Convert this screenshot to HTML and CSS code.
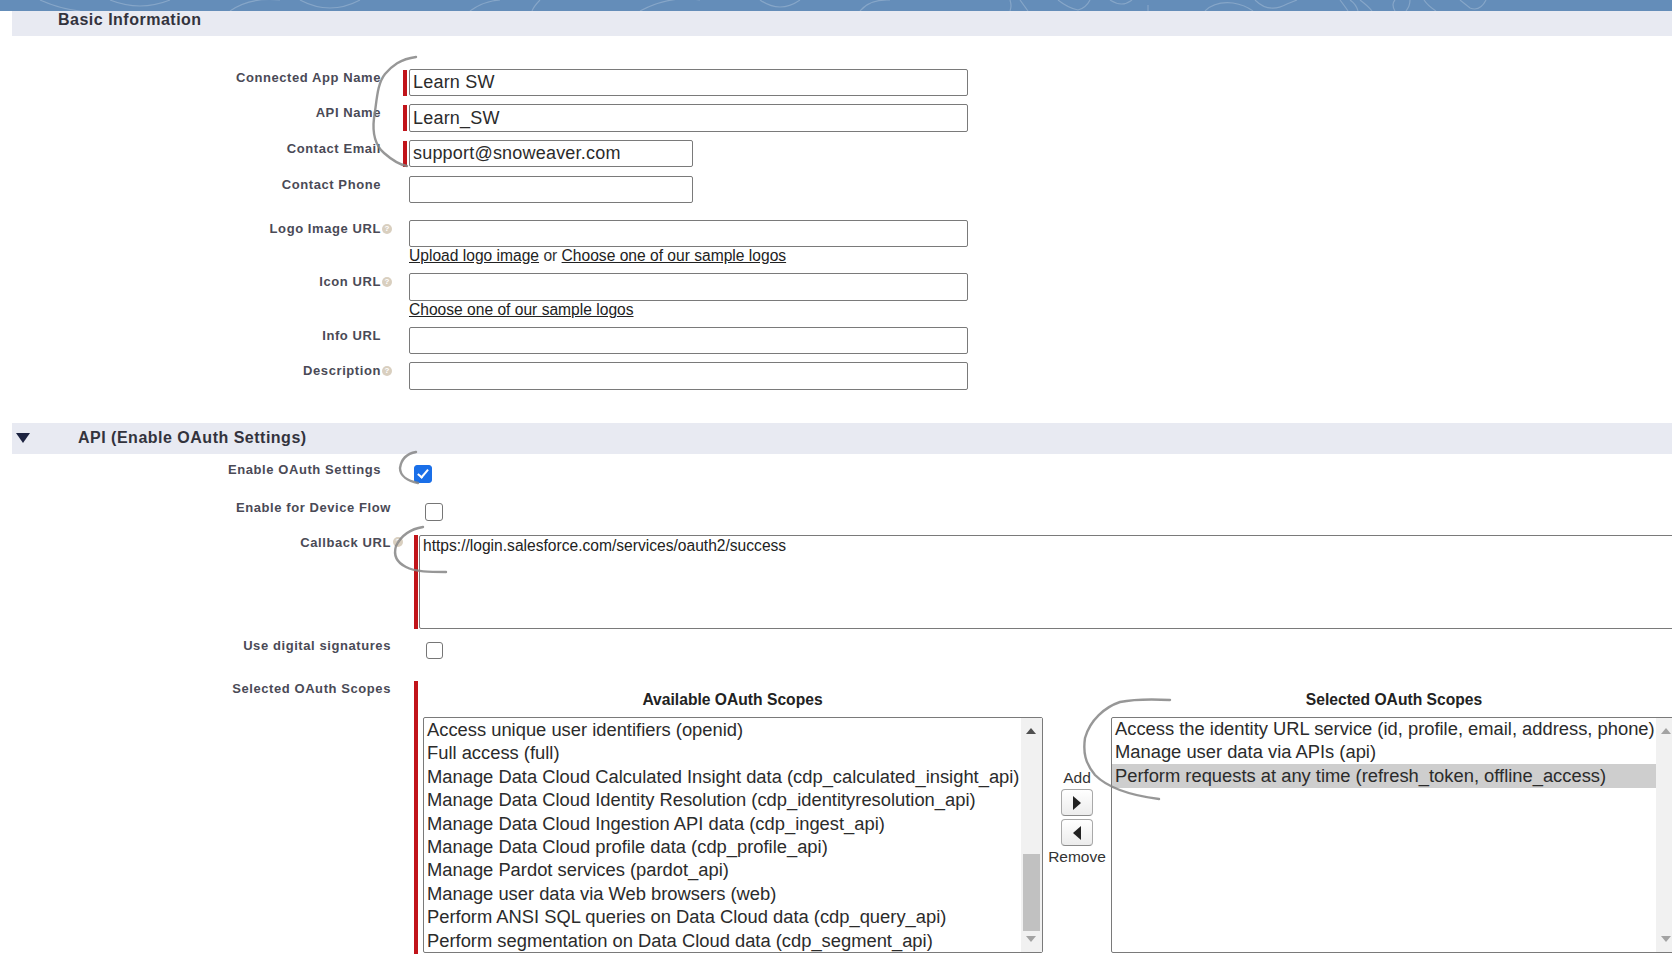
FILE: index.html
```html
<!DOCTYPE html>
<html lang="en">
<head>
<meta charset="utf-8">
<title>Connected App</title>
<link rel="stylesheet" href="styles.css">
</head>
<body>
<div class="banner">
  <svg class="banner-art" width="1672" height="11" viewBox="0 0 1672 11" fill="none">
    <path d="M40 0q20 9 40 11M110 0q30 12 60 0M230 11q20-14 50-11M300 0q30 16 60 0M470 11q14-10 30-11M540 0q-6 6-8 11M640 11q30-16 60-11M760 0q20 14 40 0M860 11q10-12 30-11M1010 0q2 6 0 11M1020 0l8 11M1058 0q10 8 20 10q8-2 12-10M1110 0q12 8 22 0M1148 11v-6M1205 11q10-10 28-8q12 2 20 8M1255 0q14 14 32 4l10-4M1340 0q6 8 8 11M1350 0q6 4 8 11M1360 0q8 6 12 11M1395 0q-4 4 0 11M1410 0q0 6-4 11M1424 0q4 6 12 11M1460 0l10 8q10 4 16-8" />
  </svg>
</div>

<section class="section section-basic">
  <h2 class="section-title title-basic">Basic Information</h2>
  <div class="rows-basic">
    <div class="row">
      <label class="label">Connected App Name</label><span class="help-slot"></span><span class="req"></span>
      <div class="field"><input class="text wide" type="text" value="Learn SW"></div>
    </div>
    <div class="row row-tight">
      <label class="label">API Name</label><span class="help-slot"></span><span class="req"></span>
      <div class="field"><input class="text wide" type="text" value="Learn_SW"></div>
    </div>
    <div class="row row-after-tall">
      <label class="label">Contact Email</label><span class="help-slot"></span><span class="req"></span>
      <div class="field"><input class="text short" type="text" value="support@snoweaver.com"></div>
    </div>
    <div class="row">
      <label class="label">Contact Phone</label><span class="help-slot"></span><span class="req-none"></span>
      <div class="field"><input class="text short" type="text"></div>
    </div>
    <div class="row row-group">
      <label class="label">Logo Image URL</label><span class="help-slot"><span class="help">?</span></span><span class="req-none"></span>
      <div class="field">
        <input class="text wide" type="text">
        <div class="links"><a href="#">Upload logo image</a> or <a href="#">Choose one of our sample logos</a></div>
      </div>
    </div>
    <div class="row row-tight">
      <label class="label">Icon URL</label><span class="help-slot"><span class="help">?</span></span><span class="req-none"></span>
      <div class="field">
        <input class="text wide" type="text">
        <div class="links"><a href="#">Choose one of our sample logos</a></div>
      </div>
    </div>
    <div class="row">
      <label class="label">Info URL</label><span class="help-slot"></span><span class="req-none"></span>
      <div class="field"><input class="text wide" type="text"></div>
    </div>
    <div class="row row-tight">
      <label class="label">Description</label><span class="help-slot"><span class="help">?</span></span><span class="req-none"></span>
      <div class="field"><input class="text wide" type="text"></div>
    </div>
  </div>
</section>

<section class="section section-api">
  <h2 class="section-title title-api">
    <svg class="twist" width="14" height="10" viewBox="0 0 14 10"><path d="M0 0h14L7 10z" fill="#1c2340"/></svg>
    <span>API (Enable OAuth Settings)</span>
  </h2>
  <div class="api-row row-enable">
    <label class="label label-api label-short">Enable OAuth Settings</label>
    <input class="check check-enable" type="checkbox" checked>
  </div>
  <div class="api-row row-device">
    <label class="label label-api">Enable for Device Flow</label>
    <input class="check check-device" type="checkbox">
  </div>
  <div class="api-row row-callback">
    <label class="label label-api label-help">Callback URL<span class="help help-callback">?</span></label>
    <span class="req-api"></span>
    <textarea class="callback">https://login.salesforce.com/services/oauth2/success</textarea>
  </div>
  <div class="api-row row-digital">
    <label class="label label-api">Use digital signatures</label>
    <input class="check check-digital" type="checkbox">
  </div>
  <div class="api-row row-scopes">
    <label class="label label-api">Selected OAuth Scopes</label>
    <span class="req-api"></span>
    <div class="scopes">
      <div class="scope-col">
        <div class="scope-head">Available OAuth Scopes</div>
        <div class="listbox">
          <ul class="options">
            <li>Access unique user identifiers (openid)</li>
            <li>Full access (full)</li>
            <li>Manage Data Cloud Calculated Insight data (cdp_calculated_insight_api)</li>
            <li>Manage Data Cloud Identity Resolution (cdp_identityresolution_api)</li>
            <li>Manage Data Cloud Ingestion API data (cdp_ingest_api)</li>
            <li>Manage Data Cloud profile data (cdp_profile_api)</li>
            <li>Manage Pardot services (pardot_api)</li>
            <li>Manage user data via Web browsers (web)</li>
            <li>Perform ANSI SQL queries on Data Cloud data (cdp_query_api)</li>
            <li>Perform segmentation on Data Cloud data (cdp_segment_api)</li>
          </ul>
          <div class="scrollbar">
            <span class="arrow-up"></span>
            <span class="thumb"></span>
            <span class="arrow-down"></span>
          </div>
        </div>
      </div>
      <div class="mover">
        <div class="mover-text">Add</div>
        <button class="mover-btn mover-add" type="button"><svg width="8" height="14" viewBox="0 0 8 14"><path d="M0 0l8 7-8 7z" fill="#222"/></svg></button>
        <button class="mover-btn" type="button"><svg width="8" height="14" viewBox="0 0 8 14"><path d="M8 0L0 7l8 7z" fill="#222"/></svg></button>
        <div class="mover-text mover-remove">Remove</div>
      </div>
      <div class="scope-col scope-selected">
        <div class="scope-head">Selected OAuth Scopes</div>
        <div class="listbox">
          <ul class="options options-selected">
            <li>Access the identity URL service (id, profile, email, address, phone)</li>
            <li>Manage user data via APIs (api)</li>
            <li class="is-selected">Perform requests at any time (refresh_token, offline_access)</li>
          </ul>
          <div class="scrollbar scrollbar-idle">
            <span class="arrow-up"></span>
            <span class="arrow-down"></span>
          </div>
        </div>
      </div>
    </div>
  </div>
</section>

<svg class="ink" width="1672" height="954" viewBox="0 0 1672 954" fill="none">
  <path d="M416 57C400 59 392 66 385 74C377 84 377 100 374 118C372 135 376 146 384 153C392 160 400 165 407 166"/>
  <path d="M416 452C405 454 401 461 400 468C400 476 408 481 418 483"/>
  <path d="M423 527C410 529 401 536 396 546C393 556 398 563 406 567C415 572 430 572 446 572"/>
  <path d="M1170 700C1150 699 1130 700 1120 702C1105 707 1090 720 1085 738C1083 752 1085 763 1095 775C1110 790 1135 796 1159 799"/>
</svg>
</body>
</html>
```

FILE: styles.css
```css
html, body {
  margin: 0;
  height: 954px;
  overflow: hidden;
  background: #fff;
}
body {
  position: relative;
  width: 1672px;
  font-family: "Liberation Sans", Arial, sans-serif;
  color: #222;
}
.banner {
  height: 11px;
  background: #648db9;
  overflow: hidden;
}
.banner-art {
  display: block;
  stroke: rgba(255, 255, 255, .22);
  stroke-width: 1.2;
}
.section { margin: 0; }
.section-title {
  margin: 0 0 0 12px;
  background: #e8eaf2;
  color: #33333d;
  font-size: 16px;
  font-weight: 700;
  letter-spacing: .5px;
}
.title-basic {
  height: 25px;
  padding: 1px 0 0 46px;
  line-height: 16px;
  box-sizing: border-box;
}
.title-api {
  height: 31px;
  display: flex;
  align-items: center;
  box-sizing: border-box;
  padding: 0 0 2px 4px;
}
.twist { margin-right: 48px; }
.rows-basic { padding-top: 33px; }
.section-api { margin-top: 33px; }
.row {
  display: flex;
  align-items: flex-start;
  margin-top: 9px;
}
.rows-basic .row:first-child { margin-top: 0; }
.row-tight { margin-top: 8px; }
.row-after-tall { margin-top: 8px; }
.row-group { margin-top: 17px; }
.label {
  flex: none;
  width: 381px;
  box-sizing: border-box;
  padding-top: 1px;
  text-align: right;
  font-size: 13px;
  font-weight: 700;
  line-height: 16px;
  letter-spacing: .58px;
  color: #4a4a56;
}
.help-slot { flex: none; width: 22px; height: 17px; display: flex; align-items: center; }
.help {
  display: inline-block;
  width: 10px;
  height: 10px;
  margin-left: 1px;
  border-radius: 50%;
  background: #d9cfbf;
  color: #fff;
  font-size: 8px;
  font-weight: 700;
  line-height: 10px;
  text-align: center;
  letter-spacing: 0;
}
.req { flex: none; width: 4px; height: 26px; margin: 1px 2px 0 0; background: #c1141a; }
.req-none { flex: none; width: 6px; }
.field { flex: none; }
.text {
  display: block;
  box-sizing: border-box;
  height: 27px;
  padding: 0 3px;
  border: 1px solid #7a7a7a;
  border-radius: 2px;
  background: #fff;
  font: 18px "Liberation Sans", Arial, sans-serif;
  letter-spacing: .2px;
  color: #2b2b2b;
  outline: 0;
}
.row-tight .text { height: 28px; }
.wide { width: 559px; }
.short { width: 284px; }
.links {
  height: 18px;
  line-height: 18px;
  font-size: 15.6px;
  color: #333;
  white-space: nowrap;
}
.row-tight .links { height: 17px; }
.links a { color: #222; text-decoration: underline; }
.api-row {
  display: flex;
  align-items: flex-start;
}
.label-api { width: 391px; }
.label-short { padding-right: 10px; }
.label-help { position: relative; }
.row-enable { margin-top: 7px; height: 22px; }
.row-device { margin-top: 16px; height: 22px; }
.row-callback { margin-top: 13px; }
.row-digital { margin-top: 8px; height: 23px; }
.row-scopes { margin-top: 20px; }
.check {
  appearance: none;
  -webkit-appearance: none;
  position: relative;
  flex: none;
  box-sizing: border-box;
  width: 18px;
  height: 18px;
  margin: 4px 0 0;
  border: 1px solid #767676;
  border-radius: 3px;
  background: #fff;
}
.check:checked { background: #1a6fe8; border-color: #1a6fe8; }
.check:checked::after {
  content: "";
  position: absolute;
  left: 5px;
  top: 1px;
  width: 4px;
  height: 9px;
  border: solid #fff;
  border-width: 0 2.5px 2.5px 0;
  transform: rotate(40deg);
}
.check-enable { margin-left: 23px; }
.check-device { margin-left: 34px; }
.check-digital { margin: 5px 0 0 35px; width: 17px; height: 17px; }
.help-callback {
  position: absolute;
  left: 100%;
  top: 3px;
  margin-left: 2px;
}
.req-api {
  flex: none;
  align-self: stretch;
  width: 4px;
  margin: 1px 1px 0 23px;
  background: #c1141a;
}
.callback {
  flex: none;
  display: block;
  box-sizing: border-box;
  width: 1290px;
  height: 94px;
  margin: 1px 0 0;
  padding: 1px 3px;
  border: 1px solid #7a7a7a;
  border-radius: 2px;
  font: 15.6px/18px "Liberation Sans", Arial, sans-serif;
  color: #222;
  resize: none;
  outline: 0;
}
.row-scopes { height: 274px; }
.scopes {
  flex: none;
  display: grid;
  grid-template-columns: 620px 68px 567px;
  padding-left: 3.5px;
}
.scope-head {
  padding-top: 10px;
  height: 18px;
  margin-bottom: 9px;
  line-height: 20px;
  font-size: 15.65px;
  font-weight: 700;
  text-align: center;
  color: #222;
}
.listbox {
  display: flex;
  box-sizing: border-box;
  height: 236px;
  border: 1px solid #7a7a7a;
  border-radius: 2px;
}
.options {
  flex: 1;
  min-width: 0;
  margin: 0;
  padding: 0 0 0 1px;
  list-style: none;
  font-size: 18.35px;
  color: #2b2b2b;
}
.options li {
  height: 23.4px;
  line-height: 23.4px;
  padding-left: 2.5px;
  white-space: nowrap;
}
.options-selected { margin-top: -1px; padding-left: 0; }
.options-selected li { padding-left: 3.5px; }
.options .is-selected { background: #cecece; box-shadow: 0 1px #cecece; }
.scrollbar {
  flex: none;
  position: relative;
  width: 21px;
  background: #f1f1f1;
}
.thumb {
  position: absolute;
  left: 2px;
  right: 2px;
  top: 136px;
  height: 77px;
  background: #c1c1c1;
}
.arrow-up, .arrow-down {
  position: absolute;
  left: 5px;
  width: 0;
  height: 0;
  border: 5px solid transparent;
  border-top: 0;
  border-bottom: 6px solid #505050;
}
.arrow-up { top: 10px; }
.arrow-down {
  bottom: 10px;
  border-bottom: 0;
  border-top: 6px solid #a3a3a3;
}
.scrollbar-idle .arrow-up { border-bottom-color: #a3a3a3; }
.mover {
  display: flex;
  flex-direction: column;
  align-items: center;
  padding: 89px 0 0 1px;
}
.mover-text {
  height: 18px;
  line-height: 18px;
  font-size: 15.5px;
  color: #333;
}
.mover-btn {
  display: flex;
  align-items: center;
  justify-content: center;
  box-sizing: border-box;
  width: 32px;
  height: 27px;
  margin: 3px 0 0;
  padding: 0;
  border: 1px solid #a9a9a9;
  border-bottom-color: #8b8b8b;
  border-radius: 4px;
  background: linear-gradient(#fff, #ececec);
}
.mover-add { margin-top: 2px; }
.mover-remove { margin-top: 2px; }
.ink {
  position: absolute;
  left: 0;
  top: 0;
  pointer-events: none;
  stroke: #868686;
  stroke-width: 2.4;
  stroke-linecap: round;
  opacity: .85;
}
```
